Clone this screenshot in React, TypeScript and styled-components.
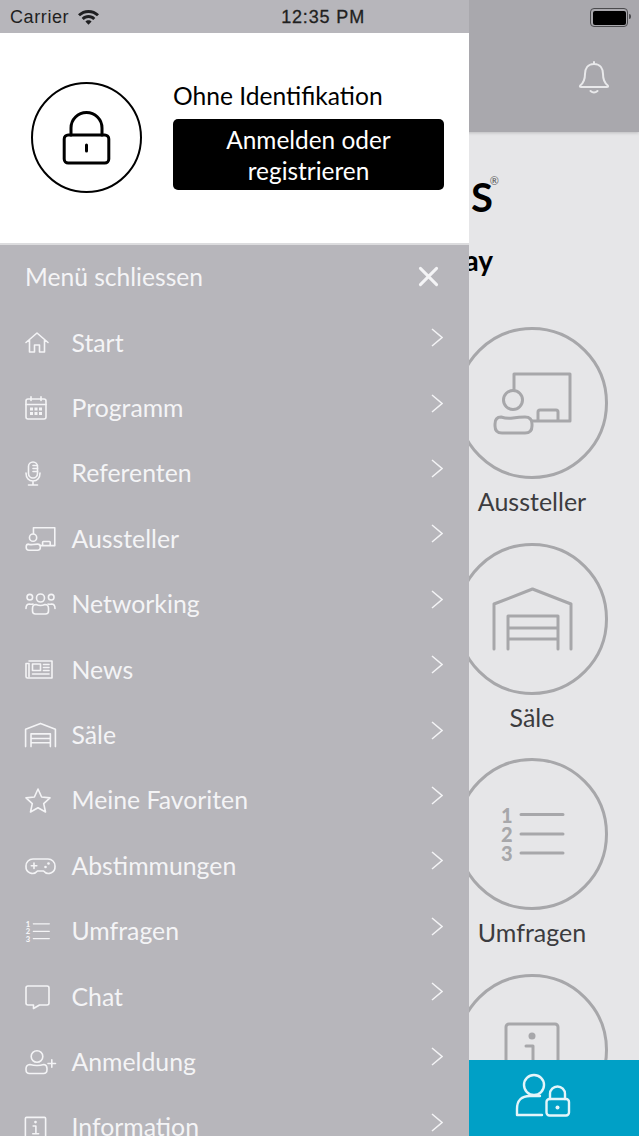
import type { ReactNode } from "react";
import styled, { createGlobalStyle } from "styled-components";

const GlobalStyle = createGlobalStyle`
  html, body {
    margin: 0;
    padding: 0;
    font-family: "Lato", "Liberation Sans", sans-serif;
  }
`;

const Screen = styled.div`
  position: relative;
  width: 639px;
  height: 1136px;
  overflow: hidden;
  display: flex;
  flex-direction: column;
  background: #e6e6e8;
`;

/* page behind the drawer */
const TopBar = styled.header`
  height: 132px;
  flex-shrink: 0;
  box-sizing: border-box;
  padding: 8px 11px 0 0;
  background: #a9a8ad;
  box-shadow: 0 1px 3px rgba(0, 0, 0, 0.18);
  display: flex;
  flex-direction: column;
  align-items: flex-end;
`;
const Battery = styled.div`
  position: relative;
  width: 33px;
  height: 14px;
  border: 1.5px solid #4b4b4e;
  border-radius: 4px;
  padding: 1.5px;
  box-sizing: content-box;
  &::before {
    content: "";
    display: block;
    height: 100%;
    background: #000;
    border-radius: 2px;
  }
  &::after {
    content: "";
    position: absolute;
    right: -4px;
    top: 5px;
    width: 2px;
    height: 5px;
    background: #4b4b4e;
    border-radius: 0 2px 2px 0;
  }
`;
const BellButton = styled.div`
  margin: 34px 19px 0 0;
  color: #e9e9eb;
  line-height: 0;
`;
const PageBody = styled.main`
  flex: 1;
  min-height: 0;
  padding-right: 31px;
  display: flex;
  flex-direction: column;
  align-items: flex-end;
  color: #000;
`;
const Brand = styled.div`
  margin: 43px 116px 0 0;
  width: 0;
  display: flex;
  justify-content: flex-end;
  font-size: 40px;
  line-height: 44px;
  font-weight: 700;
  white-space: nowrap;
  sup {
    font-size: 11px;
    line-height: 11px;
    font-weight: 400;
    color: #555;
    margin: 0 -7px 0 -3px;
  }
`;
const Tagline = styled.div`
  margin: 25px 115px 0 0;
  width: 0;
  display: flex;
  justify-content: flex-end;
  font-size: 28px;
  line-height: 32px;
  font-weight: 700;
`;
const Tiles = styled.div`
  margin-top: 51px;
  display: flex;
  flex-direction: column;
`;
const Tile = styled.div`
  width: 152px;
  height: 215.7px;
  display: flex;
  flex-direction: column;
  align-items: center;
`;
const TileCircle = styled.div`
  width: 152px;
  height: 152px;
  box-sizing: border-box;
  flex-shrink: 0;
  border: 3px solid #a7a7aa;
  border-radius: 50%;
  display: flex;
  align-items: center;
  justify-content: center;
  color: #a7a7aa;
`;
const TileLabel = styled.div`
  margin-top: 7px;
  font-size: 25px;
  line-height: 31px;
  color: #3c3c3f;
`;
const BottomBar = styled.footer`
  height: 76px;
  flex-shrink: 0;
  position: relative;
  z-index: 1;
  background: #00a0c6;
  color: #e4f5fa;
  box-sizing: border-box;
  padding: 14px 69px 0 0;
  display: flex;
  justify-content: flex-end;
  align-items: flex-start;
`;

/* drawer over the page */
const Drawer = styled.aside`
  position: absolute;
  z-index: 2;
  left: 0;
  top: 0;
  bottom: 0;
  width: 469px;
  overflow: hidden;
  display: flex;
  flex-direction: column;
  background: #b7b6bb;
  color: #f4f4f6;
`;
const StatusRow = styled.div`
  height: 33px;
  flex-shrink: 0;
  box-sizing: border-box;
  padding: 1px 104px 0 10px;
  display: flex;
  align-items: center;
  font-family: "Liberation Sans", Arial, sans-serif;
  font-size: 18px;
  color: #1f1f21;
`;
const Carrier = styled.span`
  margin-right: 9px;
  letter-spacing: 0.6px;
`;
const Clock = styled.span`
  margin-left: auto;
  letter-spacing: 0.85px;
  -webkit-text-stroke: 0.3px #1f1f21;
`;
const Profile = styled.section`
  height: 212px;
  flex-shrink: 0;
  box-sizing: border-box;
  padding: 0 25px 0 31px;
  background: #fff;
  border-bottom: 2px solid #dcdcde;
  display: flex;
  align-items: center;
  gap: 31px;
  color: #000;
`;
const Avatar = styled.div`
  width: 111px;
  height: 111px;
  flex-shrink: 0;
  margin-top: -2px;
  box-sizing: border-box;
  border: 2px solid #000;
  border-radius: 50%;
  display: flex;
  align-items: center;
  justify-content: center;
`;
const ProfileInfo = styled.div`
  flex: 1;
  margin-top: -5px;
`;
const ProfileName = styled.div`
  font-size: 24.6px;
  line-height: 30px;
  margin-bottom: 8px;
`;
const LoginButton = styled.div`
  height: 71px;
  background: #000;
  border-radius: 5px;
  color: #fff;
  font-size: 24.4px;
  line-height: 31px;
  display: flex;
  align-items: center;
  justify-content: center;
  text-align: center;
`;
const CloseRow = styled.div`
  height: 65px;
  flex-shrink: 0;
  box-sizing: border-box;
  padding: 0 31px 2px 25px;
  display: flex;
  align-items: center;
  justify-content: space-between;
  font-size: 24.6px;
  line-height: 30px;
`;
const MenuList = styled.nav`
  display: flex;
  flex-direction: column;
`;
const MenuRow = styled.div`
  height: 65.4px;
  flex-shrink: 0;
  box-sizing: border-box;
  padding: 0 26px 0 25px;
  display: flex;
  align-items: center;
`;
const IconSlot = styled.span`
  width: 46.5px;
  flex-shrink: 0;
  display: flex;
  align-items: center;
  line-height: 0;
`;
const MenuLabel = styled.span`
  flex: 1;
  font-size: 24.8px;
  line-height: 30px;
`;
const Chevron = styled.svg`
  margin-bottom: 10px;
  flex-shrink: 0;
`;
const Glyph = styled.svg<{ $stroke: number }>`
  display: block;
  fill: none;
  stroke: currentColor;
  stroke-width: ${(p) => p.$stroke}px;
  stroke-linecap: round;
  stroke-linejoin: round;
  overflow: visible;
  & * {
    vector-effect: non-scaling-stroke;
  }
  text {
    fill: currentColor;
    stroke: none;
    font-family: "Lato", sans-serif;
    font-weight: 900;
  }
  .solid {
    fill: currentColor;
    stroke: none;
  }
`;

interface IconProps {
  w: number;
  h: number;
  s?: number;
}

const makeIcon = (viewBox: string, body: ReactNode) =>
  function Icon({ w, h, s = 1.6 }: IconProps) {
    return (
      <Glyph width={w} height={h} viewBox={viewBox} $stroke={s}>
        {body}
      </Glyph>
    );
  };

const HomeIcon = makeIcon(
  "0 0 24 21",
  <path d="M1 10.500 12 1l11 9.500M4.500 8.500V20H9.500V13H14.500V20H19.500V8.500" />
);
const CalendarIcon = makeIcon(
  "0 0 22 24",
  <>
    <rect x="1" y="3" width="20" height="20" rx="2" />
    <path d="M1 8.500H21M6 .8V4.500M16 .8V4.500" />
    <path
      className="solid"
      d="M5 11.500h3v3H5zM9.500 11.500h3v3h-3zM14 11.500h3v3h-3zM5 16h3v3H5zM9.500 16h3v3h-3zM14 16h3v3h-3z"
    />
  </>
);
const MicIcon = makeIcon(
  "0 0 16 25",
  <>
    <rect x="3.500" y="1" width="9" height="16" rx="4.500" />
    <path d="M8 4.500H12.500M8 7.500H12.500M8 10.500H12.500M1 12c0 5 3 8 7 8s7-3 7-8M8 20V24M3.500 24H12.500" />
  </>
);
const ExhibitorIcon = makeIcon(
  "32 50 79 63",
  <>
    <path d="M53 67V52H109V99H71M77 99V90q0-2 2-2H95q2 0 2 2V99" />
    <circle cx="52" cy="78" r="9.500" />
    <path d="M40 95q6 2 12 1 6-1 12-1 7 0 7 7v2q0 7-7 7H41q-7 0-7-7v-2q0-7 6-7Z" />
  </>
);
const PeopleIcon = makeIcon(
  "0 0 31 22",
  <>
    <circle cx="15.500" cy="5" r="4" />
    <circle cx="4.800" cy="4.200" r="2.800" />
    <circle cx="26.200" cy="4.200" r="2.800" />
    <path d="M11 11.500q4.500 2 9 0 3.500 0 3.500 4v2.500q0 3-3 3H10.500q-3 0-3-3V15.500q0-4 3.500-4Z" />
    <path d="M1 15.500q0-4.500 3.500-4.500 2 .5 3.500 0M30 15.500q0-4.500-3.500-4.500-2 .5-3.500 0" />
  </>
);
const NewsIcon = makeIcon(
  "0 0 28 19",
  <>
    <path d="M4 1H27V18H2.500Q1 18 1 16.500V3.500H4V16.500" />
    <rect x="7.500" y="4" width="8" height="6.500" />
    <path d="M18.500 4.500H24M18.500 7.500H24M18.500 10.500H24M7.500 14H24" />
  </>
);
const HallIcon = makeIcon(
  "-1 -1 79 62",
  <path d="M0 60V15L38.500 0 77 15V60M14 60V27H64V60M14 39H64M14 50H64" />
);
const StarIcon = makeIcon(
  "0 0 26 25",
  <path d="M13 1l3.600 8 8.400.9-6.300 5.700 1.800 8.400L13 19.800 5.500 24l1.800-8.400L1 9.900 9.400 9Z" />
);
const GamepadIcon = makeIcon(
  "0 0 31 16",
  <>
    <path d="M8 1H23a7 7 0 0 1 7 7v.5a6.500 6.500 0 0 1-11.500 4.500H12.500A6.500 6.500 0 0 1 1 8.500V8a7 7 0 0 1 7-7Z" />
    <path d="M9 5V10.500M6.300 7.800H11.800" />
    <circle className="solid" cx="23.500" cy="5.500" r="1.300" />
    <circle className="solid" cx="20.500" cy="9" r="1.300" />
  </>
);
const ListIcon = makeIcon(
  "0 0 62 55",
  <>
    <text x="0" y="16" fontSize="20">1</text>
    <text x="0" y="35" fontSize="20">2</text>
    <text x="0" y="54" fontSize="20">3</text>
    <path d="M20 7.500H62M20 27H62M20 46H62" />
  </>
);
const ChatIcon = makeIcon(
  "0 0 25 24",
  <path d="M3 1H22q2 0 2 2V18q0 2-2 2H14.500L8.500 23.500V20H3q-2 0-2-2V3q0-2 2-2Z" />
);
const AddUserIcon = makeIcon(
  "0 0 31 24",
  <>
    <circle cx="12" cy="6.500" r="5.800" />
    <path d="M5 14.500q7 2 14 0 3 .5 3 4v1q0 4-3.500 4H4.500q-3.500 0-3.500-4v-1q0-3.500 4-4Z" />
    <path d="M23 13.500H30.500M26.800 9.800V17.200" />
  </>
);
const InfoIcon = makeIcon(
  "0 0 54 54",
  <>
    <rect x="1" y="1" width="52" height="52" rx="3" />
    <circle className="solid" cx="27" cy="13" r="3.500" />
    <path d="M21 23H28V43M20 43H35" />
  </>
);
const CloseIcon = makeIcon("0 0 20 20", <path d="M1.500 1.500 18.500 18.500M18.500 1.500 1.500 18.500" />);
const LockIcon = makeIcon(
  "0 0 47 53",
  <>
    <path d="M8 24V17a15.500 15.500 0 0 1 31 0V24" />
    <rect x="1.200" y="24" width="44.600" height="28" rx="4" />
    <path d="M23.500 34V40" />
  </>
);
const BellIcon = makeIcon(
  "0 0 30 33",
  <>
    <path d="M15 1V3M15 3C8.500 3 6 8 6 13c0 6-1.500 9-4.800 11.500q-.9 1.500 1 1.500H27.800q1.900 0 1-1.500C25.500 22 24 19 24 13c0-5-2.500-10-9-10Z" />
    <path d="M11.500 30q3.500 3 7 0" />
  </>
);
const UserLockIcon = makeIcon(
  "0 0 54 42",
  <>
    <circle cx="18" cy="11" r="10" />
    <path d="M24 22H14Q1 22 1 35V41H26" />
    <path d="M34 25V20a7.500 7.500 0 0 1 15 0V25" />
    <rect x="30.500" y="25" width="22.500" height="16.500" rx="3" />
    <circle className="solid" cx="41.500" cy="33.500" r="2" />
  </>
);

const WifiIcon = () => (
  <svg width="21" height="15" viewBox="0 0 21 15">
    <path
      fill="#1f1f21"
      d="M10.500 0C6.500 0 3 1.500 0 4.200l2 2.100C4.400 4.100 7.300 2.900 10.500 2.900s6.100 1.200 8.500 3.400l2-2.100C18 1.500 14.500 0 10.500 0ZM10.500 5.100c-2.600 0-5 1-6.800 2.800l2 2.100c1.300-1.200 3-2 4.800-2s3.500.8 4.800 2l2-2.100c-1.800-1.800-4.200-2.800-6.800-2.800ZM10.500 10.200c-1.200 0-2.300.5-3.100 1.200l3.100 3.400 3.100-3.400c-.8-.7-1.900-1.200-3.100-1.200Z"
    />
  </svg>
);

const menuItems = [
  { label: "Start", icon: <HomeIcon w={24} h={21} /> },
  { label: "Programm", icon: <CalendarIcon w={22} h={24} /> },
  { label: "Referenten", icon: <MicIcon w={16} h={25} /> },
  { label: "Aussteller", icon: <ExhibitorIcon w={31} h={24} /> },
  { label: "Networking", icon: <PeopleIcon w={31} h={22} /> },
  { label: "News", icon: <NewsIcon w={28} h={19} /> },
  { label: "Säle", icon: <HallIcon w={31} h={24} /> },
  { label: "Meine Favoriten", icon: <StarIcon w={26} h={25} /> },
  { label: "Abstimmungen", icon: <GamepadIcon w={31} h={16} /> },
  { label: "Umfragen", icon: <ListIcon w={25} h={21} s={1.2} /> },
  { label: "Chat", icon: <ChatIcon w={25} h={24} /> },
  { label: "Anmeldung", icon: <AddUserIcon w={31} h={24} /> },
  { label: "Information", icon: <InfoIcon w={21} h={21} /> },
];

const tiles = [
  { label: "Aussteller", icon: <ExhibitorIcon w={79} h={63} s={3} /> },
  { label: "Säle", icon: <HallIcon w={79} h={62} s={3} /> },
  { label: "Umfragen", icon: <ListIcon w={62} h={55} s={3} /> },
  { label: "", icon: <InfoIcon w={54} h={54} s={3} /> },
];

export default function App() {
  return (
    <Screen>
      <GlobalStyle />
      <TopBar>
        <Battery />
        <BellButton>
          <BellIcon w={30} h={33} s={2} />
        </BellButton>
      </TopBar>
      <PageBody>
        <Brand>
          S<sup>®</sup>
        </Brand>
        <Tagline>ay</Tagline>
        <Tiles>
          {tiles.map((tile) => (
            <Tile key={tile.label}>
              <TileCircle>{tile.icon}</TileCircle>
              {tile.label && <TileLabel>{tile.label}</TileLabel>}
            </Tile>
          ))}
        </Tiles>
      </PageBody>
      <BottomBar>
        <UserLockIcon w={54} h={42} s={2.4} />
      </BottomBar>

      <Drawer>
        <StatusRow>
          <Carrier>Carrier</Carrier>
          <WifiIcon />
          <Clock>12:35 PM</Clock>
        </StatusRow>
        <Profile>
          <Avatar>
            <LockIcon w={47} h={53} s={3} />
          </Avatar>
          <ProfileInfo>
            <ProfileName>Ohne Identifikation</ProfileName>
            <LoginButton>
              Anmelden oder
              <br />
              registrieren
            </LoginButton>
          </ProfileInfo>
        </Profile>
        <CloseRow>
          Menü schliessen
          <CloseIcon w={19} h={19} s={3} />
        </CloseRow>
        <MenuList>
          {menuItems.map((item) => (
            <MenuRow key={item.label}>
              <IconSlot>{item.icon}</IconSlot>
              <MenuLabel>{item.label}</MenuLabel>
              <Chevron width="12" height="19" viewBox="0 0 12 19" fill="none" stroke="#f3f3f5" strokeWidth="1.5">
                <path d="M1 1l10 8.500L1 18" />
              </Chevron>
            </MenuRow>
          ))}
        </MenuList>
      </Drawer>
    </Screen>
  );
}
